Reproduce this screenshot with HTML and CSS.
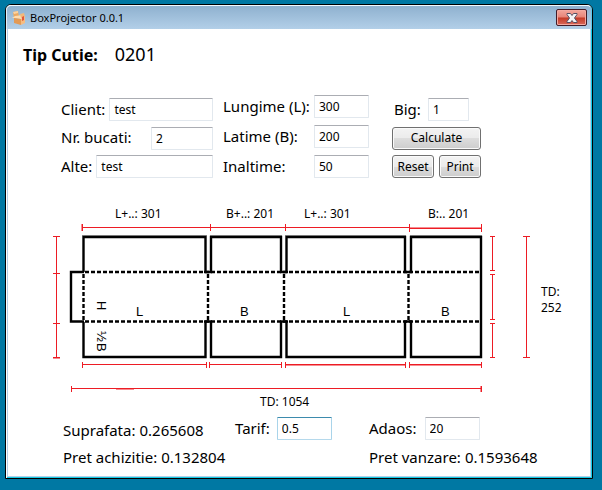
FILE: index.html
```
<!DOCTYPE html>
<html lang="ro">
<head>
<meta charset="utf-8">
<title>BoxProjector 0.0.1</title>
<link rel="stylesheet" href="styles.css">
</head>
<body>
<main class="window">
  <header class="titlebar">
    <svg class="app-icon" width="14" height="16" viewBox="0 0 14 16" aria-hidden="true">
      <path fill="#eda962" d="M1 2l5-1 1 6-5 1z"/>
      <path fill="#fbd3a0" d="M1 2l5-1v2L2 4z"/>
      <path fill="#ffdcae" d="M0 8l3-2 8-1 2 2-4 2-7-1z"/>
      <path fill="#f4b878" d="M8 4l4-1 1 4-4 1z"/>
      <path fill="#e39a55" d="M2 8l7 1v6l-7-2z"/>
      <path fill="#f6bd82" d="M9 9l4-2v6l-4 2z"/>
      <path fill="#e4573a" d="M10 7l2-1v4l-2 1z"/>
    </svg>
    <h1 class="title">BoxProjector 0.0.1</h1>
    <button class="close" type="button" aria-label="Close">
      <svg width="12" height="10" viewBox="0 0 12 10" aria-hidden="true">
        <path fill="#f4f4f6" stroke="#565064" d="M1 .5h3.500L6 2.500 7.500.5H11v1L8.500 5 11 8.500v1H7.500L6 7.500l-1.500 2H1v-1L3.500 5 1 1.500z"/>
      </svg>
    </button>
  </header>
  <form class="content">
    <div class="type"><strong class="type-label">Tip Cutie:</strong><span class="type-code">0201</span></div>

    <div class="fields">
      <div class="column column-order">
        <div class="field"><label for="client">Client:</label><input class="long" id="client" value="test"></div>
        <div class="field spread"><label for="pieces">Nr. bucati:</label><input class="medium" id="pieces" value="2"></div>
        <div class="field"><label for="other">Alte:</label><input class="long" id="other" value="test"></div>
      </div>
      <div class="column column-size">
        <div class="field spread"><label for="length">Lungime (L):</label><input id="length" value="300"></div>
        <div class="field spread"><label for="width">Latime (B):</label><input id="width" value="200"></div>
        <div class="field spread"><label for="height">Inaltime:</label><input id="height" value="50"></div>
      </div>
      <div class="column column-actions">
        <div class="field crease"><label for="crease">Big:</label><input class="short" id="crease" value="1"></div>
        <button class="button" type="button">Calculate</button>
        <div class="pair"><button class="button" type="reset">Reset</button><button class="button" type="button">Print</button></div>
      </div>
    </div>

    <svg class="plan" viewBox="50 204 520 206" role="img" aria-label="Box plan">
      <g class="shadow">
        <path d="M82 235.500h125M210 235.500h72M285 235.500h121M410 235.500h72"/>
      </g>
      <g class="cut">
        <path d="M83.500 272v-35H205.500v35M211 272v-35H281v35M286.500 272v-35H405v35M411 272v-35H481V357H411v-35M83.500 322v35H205.500v-35M211 322v35H281v-35M286.500 322v35H405v-35"/>
        <path d="M84 272H71v49.500H84M204 272h8M280 272h8M404 272h8M204 321.500h8M280 321.500h8M404 321.500h8"/>
      </g>
      <g class="fold">
        <path d="M85 272H481M85 321.500H481M83.500 274v47M208 274v47M284 274v47M408.500 274v47"/>
      </g>
      <g class="measure">
        <path d="M82 227.500H410M410 228.500H481M82.500 224v7M210.500 224v7M285.500 224v7M409.500 224v8M481.500 224v8"/>
        <path d="M56.500 236v122M53 236.500h7M53 273.500h7M53 323.500h7M53 357.500h7"/>
        <path d="M492.500 236v34M490 236.500h5M490 270.500h5M492.500 274v45M490 274.500h5M490 319.500h5M492.500 323v34M490 323.500h5M490 357.500h5"/>
        <path d="M526.500 236v121M523 236.500h7M523 357.500h7"/>
        <path d="M82 364.500h125M82.500 362v6M206.500 362v6M209 364.500h73M209.500 362v6M281.500 362v6M285 364.500h121M285.500 362v6M405.500 362v6M409 364.500h73M409.500 362v6M481.500 362v6"/>
        <path d="M71 388.500h410M71.500 386v6M481.500 386v6"/>
      </g>
      <path class="measure-soft" d="M81.500 224v7M53 358.500h7M285 365.500h121M409 365.500h73M116 389.500h18M480.500 386v6M410 227.500h71"/>
      <g class="dimension">
        <text x="115" y="218">L+..: 301</text>
        <text x="226" y="218">B+..: 201</text>
        <text x="304" y="218">L+..: 301</text>
        <text x="428" y="218">B:.. 201</text>
        <text x="541" y="296">TD:</text>
        <text x="541" y="312">252</text>
        <text x="260" y="406">TD: 1054</text>
      </g>
      <g class="panel-name">
        <text x="136" y="316">L</text>
        <text x="240" y="316">B</text>
        <text x="343" y="316">L</text>
        <text x="441" y="316">B</text>
        <text transform="translate(97 301) rotate(90)">H</text>
        <text transform="translate(97 331)rotate(90)">½</text>
        <text transform="translate(97 343)rotate(90)">B</text>
      </g>
    </svg>

    <div class="results">
      <div class="result area"><span>Suprafata:</span><output>0.265608</output></div>
      <div class="field rate"><label for="rate">Tarif:</label><input class="focused" id="rate" value="0.5"></div>
      <div class="field markup"><label for="markup">Adaos:</label><input id="markup" value="20"></div>
      <div class="result cost"><span>Pret achizitie:</span><output>0.132804</output></div>
      <div class="result"><span>Pret vanzare:</span><output>0.1593648</output></div>
    </div>
  </form>
</main>
</body>
</html>
```
FILE: styles.css
```
* { box-sizing: border-box; }

body {
  margin: 0;
  padding: 4px 9px 11px 5px;
  min-height: 100vh;
  display: flex;
  background: #0078a3;
  color: #000;
  font: 15px/20px "Noto Sans", "Open Sans", sans-serif;
}

.window {
  flex: 1;
  border: 1px solid #000;
  border-radius: 6px 6px 0 0;
  background: #fff;
  box-shadow: inset 1px 1px #fff, inset -1px -1px #12cbe5, inset 2px 0 #b5cfe7, inset -2px -2px #b5cfe7;
}

.titlebar {
  display: flex;
  align-items: center;
  height: 24px;
  padding: 0 4px 0 5px;
  border-top: 1px solid #f4faff;
  border-left: 1px solid #e2effa;
  border-right: 1px solid #5cc9e8;
  border-radius: 5px 5px 0 0;
  background: linear-gradient(#8fb1cf, #b2cfe8);
}

.title {
  flex: 1;
  margin: 0 0 0 4px;
  font-size: 11px;
  font-weight: 400;
}

.close {
  display: flex;
  align-items: center;
  justify-content: center;
  width: 31px;
  height: 17px;
  padding: 0;
  border: 1px solid #421c28;
  border-radius: 2px;
  background: linear-gradient(#f3a79d, #e78478 48%, #c43a26 52%, #d9695b);
  box-shadow: inset 0 0 0 1px #f3a9a0;
}

.content { padding: 13px 16px 0 17px; }

.type {
  display: flex;
  align-items: baseline;
  gap: 17px;
  line-height: 24px;
}

.type-label { font-size: 16px; }
.type-code { font-size: 18px; }

.fields {
  display: flex;
  height: 83px;
  margin: 28px 0 0 38px;
}

.column {
  display: flex;
  flex-direction: column;
  justify-content: space-between;
}

.column-order { width: 152px; margin-top: 3px; height: 80px; }
.column-size { width: 146px; margin-left: 10px; }
.column-actions { width: 89px; margin: 3px 0 0 23px; }

.field {
  display: flex;
  align-items: center;
  gap: 4px;
  white-space: nowrap;
}

.field label { padding-bottom: 2px; }

.spread { justify-content: space-between; }
.crease { gap: 7px; padding-left: 2px; }

input {
  width: 55px;
  height: 23px;
  padding: 0 4px;
  border: 1px solid #e2e8ee;
  border-top-color: #abadb3;
  border-radius: 1px;
  background: #fff;
  color: #000;
  font: 12px "Noto Sans", "Open Sans", sans-serif;
}

.long { flex: 1; min-width: 0; }
.medium { width: 62px; }
.short { width: 41px; }

.focused {
  border-color: #3d8bad #a9d4ea #b5d9ec;
}

.button {
  flex: 1 1 auto;
  height: 23px;
  max-height: 23px;
  padding: 0;
  border: 1px solid #707070;
  border-radius: 3px;
  background: linear-gradient(#f3f3f3, #ebebeb 50%, #dddddd 50%, #cdcdcd);
  box-shadow: inset 0 0 0 1px #fafafa;
  color: #000;
  font: 12px/16px "Noto Sans", "Open Sans", sans-serif;
}

.pair {
  display: grid;
  grid-template-columns: 1fr 1fr;
  gap: 5px;
}

.plan {
  display: block;
  width: 520px;
  max-width: 100%;
  margin: 26px 0 0 27px;
}

.shadow, .cut, .fold, .measure, .measure-soft { fill: none; }
.shadow { stroke: #a0a0a0; }
.cut { stroke: #000; stroke-width: 2.4; }
.fold { stroke: #000; stroke-width: 2.4; stroke-dasharray: 4 2; }
.measure { stroke: #ed1c24; }
.measure-soft { stroke: #ed1c24; stroke-opacity: .5; }
.dimension { font-size: 12px; }
.panel-name { font: 13px "Liberation Sans", sans-serif; }

.results {
  display: grid;
  grid-template-columns: 172px 134px 1fr;
  row-gap: 7px;
  margin: 7px 0 0 40px;
}

.result {
  display: flex;
  align-items: center;
  gap: 4px;
  white-space: nowrap;
}

.area { align-items: flex-end; }
.cost { grid-column: span 2; }
.rate { gap: 7px; }
.markup { gap: 8px; }
```
